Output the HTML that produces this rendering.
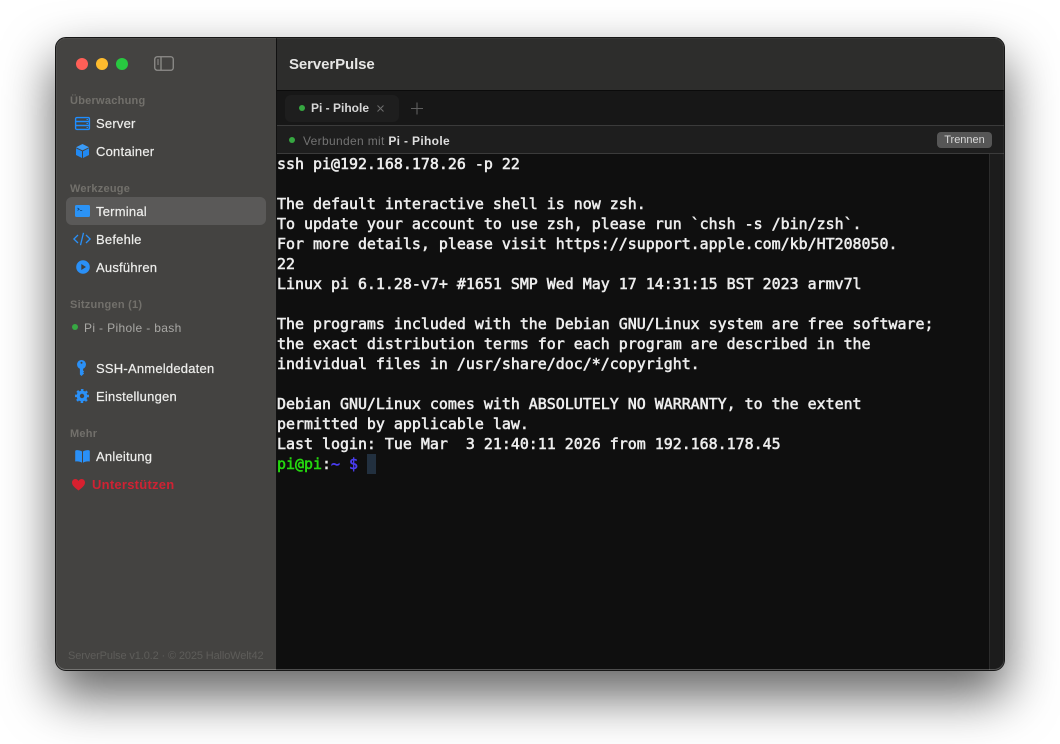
<!DOCTYPE html>
<html><head><meta charset="utf-8">
<style>
html,body{margin:0;padding:0;width:1060px;height:744px;overflow:hidden;background:#fff}
body{font-family:"Liberation Sans",sans-serif;position:relative}
#win{position:absolute;left:56px;top:38px;width:948px;height:632px;border-radius:10px;box-shadow:0 24px 50px 3px rgba(0,0,0,.6)}
#clip{position:absolute;left:0;top:0;width:948px;height:632px;border-radius:10px;overflow:hidden;background:#0f0f0f}
#edge{position:absolute;left:-1px;top:-1px;width:950px;height:634px;box-sizing:border-box;border:1px solid #161616;border-radius:11px;box-shadow:inset 0 -1px 0 rgba(255,255,255,.22),inset 0 0 0 1px rgba(255,255,255,.05);pointer-events:none}
.a{position:absolute;white-space:nowrap}
.i{position:absolute;overflow:visible}
.sec{font-size:11px;font-weight:bold;color:#72706b;line-height:14px;left:70px;letter-spacing:.25px}
.it{font-size:13px;color:#eeeeec;line-height:16px;left:96px;letter-spacing:.22px;-webkit-text-stroke:.2px #eeeeec}
#term{position:absolute;left:277px;top:154px;font:normal 14.95px/20px "DejaVu Sans Mono",monospace;color:#ededed;white-space:pre;margin:0;-webkit-text-stroke:.55px currentColor}
</style></head><body>
<div id="win"><div id="clip">
<div class="a" style="left:0;top:0;width:220px;height:632px;background:#444341"></div>
<div class="a" style="left:220px;top:0;width:1px;height:632px;background:#111"></div>
<div class="a" style="left:221px;top:0;width:727px;height:52px;background:#2d2d2c"></div>
<div class="a" style="left:221px;top:52px;width:727px;height:1px;background:#0b0b0b"></div>
<div class="a" style="left:221px;top:53px;width:727px;height:34px;background:#171717"></div>
<div class="a" style="left:221px;top:87px;width:727px;height:1px;background:#3b3b3b"></div>
<div class="a" style="left:221px;top:88px;width:727px;height:27px;background:#1e1e1e"></div>
<div class="a" style="left:221px;top:115px;width:727px;height:1px;background:#3b3b3b"></div>
<div class="a" style="left:933px;top:116px;width:15px;height:516px;background:#1c1c1c;border-left:1px solid #2c2c2c;box-sizing:border-box"></div>
</div><div id="edge"></div></div>

<!-- traffic lights -->
<div class="a" style="left:76px;top:58px;width:12px;height:12px;border-radius:50%;background:#ff5f57"></div>
<div class="a" style="left:96px;top:58px;width:12px;height:12px;border-radius:50%;background:#febc2e"></div>
<div class="a" style="left:116px;top:58px;width:12px;height:12px;border-radius:50%;background:#28c840"></div>
<svg class="i" style="left:154px;top:56px" width="20" height="15" viewBox="0 0 20 15" fill="none"><rect x=".75" y=".75" width="18.5" height="13.5" rx="2.5" stroke="#8f8e8b" stroke-width="1.3"/><path d="M7 1v13" stroke="#8f8e8b" stroke-width="1.3"/><path d="M3 4h2M3 6h2M3 8h2" stroke="#8f8e8b"/></svg>

<div class="a sec" style="top:94px">Überwachung</div>
<svg class="i" style="left:75px;top:117px" width="15" height="13" viewBox="0 0 15 13" fill="none" stroke="#1f8dff" stroke-width="1.4"><rect x=".6" y=".6" width="13.8" height="11.8" rx="1.2"/><path d="M.6 4.500h13.800M.6 8.500h13.800"/><path d="M11.500 2.500h1.500M11.500 6.500h1.500M11.500 10.500h1.500" stroke-width="1"/></svg>
<div class="a it" style="top:116px">Server</div>
<svg class="i" style="left:76px;top:144px" width="13" height="14" viewBox="0 0 13 14"><path d="M6.5 0L13 3.2 6.5 6.4 0 3.2Z" fill="#3a9bf7"/><path d="M0 4.2l6 3v6.8L0 11Z" fill="#2189f2"/><path d="M13 4.2l-6 3v6.8l6-3Z" fill="#2189f2"/></svg>
<div class="a it" style="top:144px">Container</div>

<div class="a sec" style="top:182px">Werkzeuge</div>
<div class="a" style="left:66px;top:197px;width:200px;height:28px;border-radius:6px;background:#5a5958"></div>
<svg class="i" style="left:75px;top:205px" width="15" height="12" viewBox="0 0 15 12"><rect width="15" height="12" rx="1.6" fill="#2b93f6"/><path d="M2.5 3l1.7 1.2-1.700 1.200" fill="none" stroke="#0c3d70" stroke-width=".8"/><path d="M5 5.600h2.200" stroke="#0c3d70" stroke-width=".7"/></svg>
<div class="a it" style="top:204px">Terminal</div>
<svg class="i" style="left:73px;top:232px" width="18" height="14" viewBox="0 0 18 14" fill="none" stroke="#2a90f7" stroke-width="1.3"><path d="M5 3L.9 7 5 11M13 3l4.100 4L13 11M10.500 .8L7.500 13.200"/></svg>
<div class="a it" style="top:232px">Befehle</div>
<svg class="i" style="left:76px;top:260px" width="14" height="14" viewBox="0 0 14 14"><circle cx="7" cy="7" r="6.800" fill="#2a90f7"/><path d="M5.300 4L10 7 5.300 10Z" fill="#3f3f3e"/></svg>
<div class="a it" style="top:260px">Ausführen</div>

<div class="a sec" style="top:298px">Sitzungen (1)</div>
<div class="a" style="left:72px;top:324px;width:6px;height:6px;border-radius:50%;background:#37a843"></div>
<div class="a" style="left:84px;top:320px;font-size:12px;line-height:16px;color:#a9a8a5;letter-spacing:.35px">Pi - Pihole - bash</div>

<svg class="i" style="left:77px;top:360px" width="9" height="16" viewBox="0 0 9 16"><path fill-rule="evenodd" d="M4.500 0a4.500 4.500 0 0 1 1.600 8.700V10.500l1 1-1 1 1 1L4.500 16 2.900 14.500V8.700A4.500 4.500 0 0 1 4.500 0ZM4.500 1.800a1 1 0 1 0 .01 0Z" fill="#2a90f7"/></svg>
<div class="a it" style="top:361px">SSH-Anmeldedaten</div>
<svg class="i" style="left:75px;top:389px" width="14" height="14" viewBox="0 0 14 14" fill="none" stroke="#2a90f7"><circle cx="7" cy="7" r="3.800" stroke-width="3.200"/><circle cx="7" cy="7" r="6" stroke-width="2" stroke-dasharray="2.360 2.350" transform="rotate(-11 7 7)"/></svg>
<div class="a it" style="top:389px">Einstellungen</div>

<div class="a sec" style="top:427px">Mehr</div>
<svg class="i" style="left:75px;top:450px" width="15" height="13" viewBox="0 0 15 13"><path d="M7 1.500C5.500 .4 3 0 1.200 .2 .5 .3 .2 .7 .2 1.300V11.500c2.500-.4 5-.1 6.800 1.200ZM8 1.500C9.500 .4 12 0 13.800 .2c.7 .1 1 .5 1 1.100V11.500c-2.500-.4-5-.1-6.800 1.200Z" fill="#2a90f7"/></svg>
<div class="a it" style="top:449px">Anleitung</div>
<svg class="i" style="left:72px;top:479px" width="13" height="12" viewBox="0 0 13 12"><path d="M6.500 11.500C2.500 8.500 0 6.300 0 3.500 0 1.500 1.500 0 3.300 0 4.600 0 5.800.7 6.500 2 7.200.7 8.400 0 9.700 0 11.500 0 13 1.500 13 3.500c0 2.800-2.500 5-6.500 8Z" fill="#d8202f"/></svg>
<div class="a" style="left:92px;top:477px;font-size:13px;font-weight:bold;line-height:16px;color:#cf2233;letter-spacing:.25px">Unterstützen</div>

<div class="a" style="left:68px;top:649px;font-size:11px;line-height:14px;color:#5e5d5a;letter-spacing:-.13px">ServerPulse v1.0.2 · © 2025 HalloWelt42</div>

<!-- main -->
<div class="a" style="left:289px;top:56px;font-size:15px;font-weight:bold;line-height:18px;color:#e6e6e5;letter-spacing:-.1px">ServerPulse</div>
<div class="a" style="left:285px;top:95px;width:114px;height:27px;border-radius:6px;background:#1e1e1e"></div>
<div class="a" style="left:299px;top:105px;width:6px;height:6px;border-radius:50%;background:#36a741"></div>
<div class="a" style="left:311px;top:101px;font-size:12px;font-weight:bold;line-height:15px;color:#d6d6d6">Pi - Pihole</div>
<svg class="i" style="left:377px;top:105px" width="7" height="7" viewBox="0 0 7 7" stroke="#6d6d6d" stroke-width="1"><path d="M.5.5l6 6M6.500.5l-6 6"/></svg>
<svg class="i" style="left:411px;top:102px" width="12" height="13" viewBox="0 0 12 13" stroke="#5f5f5f" stroke-width="1.100"><path d="M6 .5v12M0 6.500h12"/></svg>

<div class="a" style="left:289px;top:137px;width:6px;height:6px;border-radius:50%;background:#36a741"></div>
<div class="a" style="left:303px;top:134px;font-size:12px;line-height:15px;color:#737373;letter-spacing:.33px">Verbunden mit <b style="color:#dedede">Pi - Pihole</b></div>
<div class="a" style="left:937px;top:132px;width:55px;height:16px;border-radius:4px;background:#565656;color:#d8d8d8;font-size:11px;line-height:16px;text-align:center">Trennen</div>

<pre id="term">ssh pi@192.168.178.26 -p 22

The default interactive shell is now zsh.
To update your account to use zsh, please run `chsh -s /bin/zsh`.
For more details, please visit https://support.apple.com/kb/HT208050.
22
Linux pi 6.1.28-v7+ #1651 SMP Wed May 17 14:31:15 BST 2023 armv7l

The programs included with the Debian GNU/Linux system are free software;
the exact distribution terms for each program are described in the
individual files in /usr/share/doc/*/copyright.

Debian GNU/Linux comes with ABSOLUTELY NO WARRANTY, to the extent
permitted by applicable law.
Last login: Tue Mar  3 21:40:11 2026 from 192.168.178.45
<span style="color:#25d80f">pi@pi</span>:<span style="color:#4a3df0">~ $</span> </pre>
<div class="a" style="left:367px;top:454px;width:9px;height:20px;background:#22303f"></div>
</body></html>
